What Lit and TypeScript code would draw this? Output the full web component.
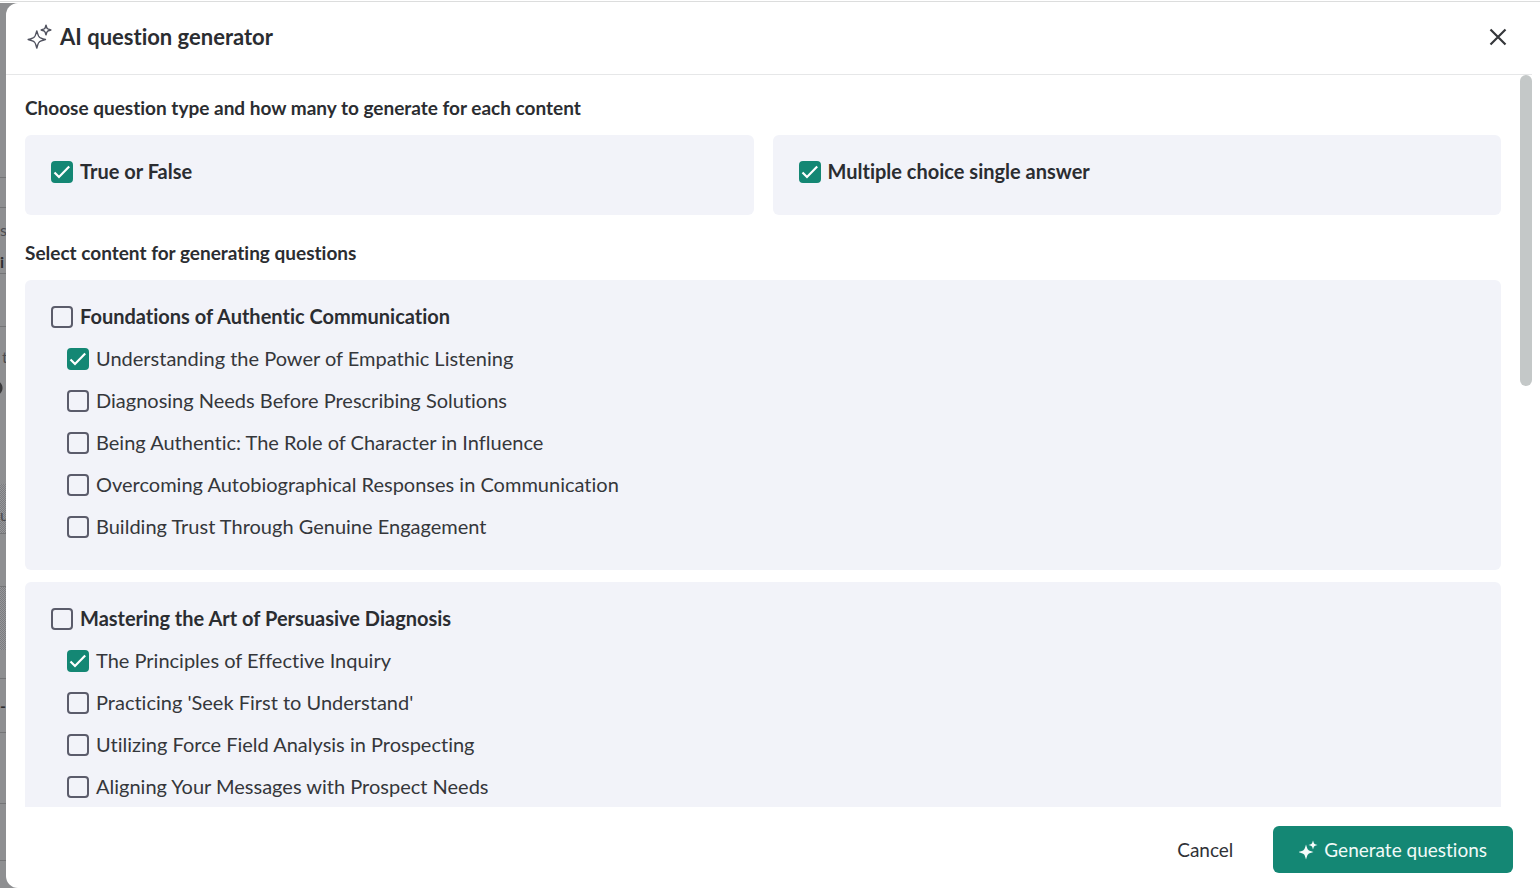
import { LitElement, html, css, svg } from "lit";
import { customElement, property, state } from "lit/decorators.js";

interface Lesson {
  title: string;
  checked: boolean;
}

interface Chapter {
  title: string;
  checked: boolean;
  lessons: Lesson[];
}

const QUESTION_TYPES: Lesson[] = [
  { title: "True or False", checked: true },
  { title: "Multiple choice single answer", checked: true },
];

const CHAPTERS: Chapter[] = [
  {
    title: "Foundations of Authentic Communication",
    checked: false,
    lessons: [
      { title: "Understanding the Power of Empathic Listening", checked: true },
      { title: "Diagnosing Needs Before Prescribing Solutions", checked: false },
      { title: "Being Authentic: The Role of Character in Influence", checked: false },
      { title: "Overcoming Autobiographical Responses in Communication", checked: false },
      { title: "Building Trust Through Genuine Engagement", checked: false },
    ],
  },
  {
    title: "Mastering the Art of Persuasive Diagnosis",
    checked: false,
    lessons: [
      { title: "The Principles of Effective Inquiry", checked: true },
      { title: "Practicing 'Seek First to Understand'", checked: false },
      { title: "Utilizing Force Field Analysis in Prospecting", checked: false },
      { title: "Aligning Your Messages with Prospect Needs", checked: false },
    ],
  },
];

/* Rows of the page that shows beside the dialog. */
const PAGE_ROWS = [
  { height: 175, text: "", kind: "" },
  { height: 30, text: "", kind: "" },
  { height: 43, text: "s", kind: "open" },
  { height: 23, text: "i", kind: "strong" },
  { height: 53, text: "", kind: "" },
  { height: 50, text: "t", kind: "open end" },
  { height: 107, text: "", kind: "open dot" },
  { height: 50, text: "u", kind: "shade low" },
  { height: 53, text: "", kind: "" },
  { height: 63, text: "", kind: "shade open" },
  { height: 29, text: "", kind: "" },
  { height: 54, text: "-", kind: "strong" },
  { height: 71, text: "", kind: "" },
  { height: 57, text: "", kind: "" },
];

/* Four-pointed star centred on cx, cy with rounded inner corners. */
const sparkle = (cx: number, cy: number, r: number) => {
  const k = r * 0.3;
  const n = r * 0.2;
  return svg`<path d="M${cx} ${cy - r}Q${cx + n} ${cy - k} ${cx + k} ${cy - k}
    Q${cx + k} ${cy - n} ${cx + r} ${cy}Q${cx + k} ${cy + n} ${cx + k} ${cy + k}
    Q${cx + n} ${cy + k} ${cx} ${cy + r}Q${cx - n} ${cy + k} ${cx - k} ${cy + k}
    Q${cx - k} ${cy + n} ${cx - r} ${cy}Q${cx - k} ${cy - n} ${cx - k} ${cy - k}
    Q${cx - n} ${cy - k} ${cx} ${cy - r}Z"/>`;
};

@customElement("check-option")
class CheckOption extends LitElement {
  @property() label = "";
  @property({ type: Boolean }) checked = false;
  @property({ type: Boolean }) strong = false;

  static styles = css`
    :host {
      display: block;
    }
    .option {
      display: flex;
      width: fit-content;
      align-items: center;
      gap: 7px;
      font-size: 20px;
      line-height: 22px;
      color: #35373b;
      cursor: pointer;
    }
    .text {
      padding-bottom: 2px;
    }
    .strong {
      font-weight: 700;
      color: #2b2d31;
    }
    .box {
      appearance: none;
      box-sizing: border-box;
      flex: none;
      width: 22px;
      height: 22px;
      margin: 0;
      border: 2px solid #5b5c6b;
      border-radius: 4px;
      cursor: pointer;
    }
    .box:checked {
      border-color: #148774;
      background: #148774
        url("data:image/svg+xml,%3Csvg xmlns='http://www.w3.org/2000/svg' viewBox='0 0 18 18'%3E%3Cpath d='M1.5 9.5l4.5 4.5L16.2 3.6' fill='none' stroke='white' stroke-width='2.2'/%3E%3C/svg%3E")
        center / 18px 18px no-repeat;
    }
  `;

  render() {
    return html`<label class="option ${this.strong ? "strong" : ""}">
      <input class="box" type="checkbox" .checked=${this.checked} />
      <span class="text">${this.label}</span>
    </label>`;
  }
}

@customElement("app-root")
class AppRoot extends LitElement {
  @state() private chapters = CHAPTERS;

  static styles = css`
    :host {
      display: flex;
      flex-direction: column;
      height: 100vh;
      position: relative;
      overflow: hidden;
      font-family: Lato, "Open Sans", sans-serif;
      font-variant-ligatures: none;
      color: #2b2d31;
      background: #ffffff;
    }
    * {
      box-sizing: border-box;
    }
    .topline {
      flex: none;
      height: 2px;
      border-bottom: 1px solid #dcdddd;
      margin-bottom: 1px;
    }
    .page {
      flex: 1;
      min-height: 0;
      width: 40px;
      background: #8e8f91;
    }
    .row {
      display: flex;
      align-items: center;
      border-bottom: 1px solid #747577;
      font-size: 16px;
      line-height: 20px;
      color: #4b4c50;
      white-space: nowrap;
    }
    .open {
      border-bottom: 0;
    }
    .end {
      padding: 10px 0 0 2px;
    }
    .low {
      padding-top: 12px;
    }
    .strong {
      font-weight: 700;
      color: #2d2e30;
    }
    .shade {
      background: repeating-conic-gradient(#7c7d80 0 25%, #96979a 0 50%) 0 0 / 2px 2px;
    }
    .dot {
      background: radial-gradient(circle at -5px 11px, #3a3a3c 7px, transparent 8px);
    }
    .dialog {
      position: absolute;
      inset: 3px 0 0 6px;
      display: flex;
      flex-direction: column;
      background: #ffffff;
      border-radius: 12px 0 0 12px;
    }
    .head {
      flex: none;
      display: flex;
      align-items: center;
      gap: 7px;
      height: 72px;
      margin-right: 8px;
      padding: 0 20px 3px 21px;
      border-bottom: 1px solid #e6e7e8;
    }
    .title {
      flex: 1;
      margin: 0;
      font-size: 22px;
      line-height: 28px;
      font-weight: 700;
    }
    .stars {
      fill: none;
      stroke: #50525f;
      stroke-width: 1.5;
      stroke-linejoin: round;
    }
    .close {
      display: grid;
      padding: 4px;
      border: 0;
      background: none;
      cursor: pointer;
    }
    .middle {
      flex: 1;
      min-height: 0;
      display: flex;
      padding-right: 8px;
    }
    .scroll {
      flex: 1;
      overflow-y: auto;
      scrollbar-width: none;
      padding: 21px 19px 0;
    }
    .thumb {
      width: 12px;
      height: 42.5%;
      border-radius: 6px;
      background: #c4c8c8;
    }
    .heading {
      margin: 0 0 15px;
      font-size: 19px;
      line-height: 24px;
      font-weight: 700;
    }
    .types {
      display: grid;
      grid-template-columns: 1fr 1fr;
      gap: 19px;
      margin-bottom: 26px;
    }
    .card {
      border-radius: 6px;
      background: #f2f3f9;
      padding: 25px 26px 31px;
    }
    .card + .chapter {
      margin-top: 12px;
    }
    .lessons {
      display: grid;
      gap: 18px;
      margin: 18px 0 0;
      padding: 0 0 0 16px;
      list-style: none;
    }
    .foot {
      flex: none;
      display: flex;
      align-items: center;
      justify-content: flex-end;
      gap: 14px;
      height: 81px;
      padding: 4px 27px 0 0;
    }
    .button {
      display: flex;
      align-items: center;
      gap: 5px;
      height: 47px;
      padding: 0 26px;
      border: 0;
      border-radius: 6px;
      background: none;
      font-family: inherit;
      font-variant-ligatures: none;
      font-size: 19px;
      line-height: 24px;
      color: #2f3136;
      cursor: pointer;
    }
    .primary {
      background: #148774;
      color: #f1faf8;
    }
    .primary svg {
      fill: #f6fcfb;
    }
  `;

  render() {
    return html`
      <div class="topline"></div>
      <div class="page" aria-hidden="true">
        ${PAGE_ROWS.map(
          (r) => html`<div class="row ${r.kind}" style="height:${r.height}px">${r.text}</div>`
        )}
      </div>
      <section class="dialog" role="dialog" aria-labelledby="title">
        <header class="head">
          <svg class="stars" width="26" height="26" viewBox="0 0 26 26" aria-hidden="true">
            ${sparkle(9.8, 15.5, 8.6)} ${sparkle(19, 6, 4.8)}
          </svg>
          <h1 class="title" id="title">AI question generator</h1>
          <button class="close" type="button" aria-label="Close">
            <svg width="20" height="20" viewBox="0 0 20 20" fill="none" stroke="#35373b" stroke-width="2.2">
              <path d="M2.5 2.5l15 15M17.5 2.5l-15 15" />
            </svg>
          </button>
        </header>
        <div class="middle">
          <div class="scroll">
            <h2 class="heading">Choose question type and how many to generate for each content</h2>
            <div class="types">
              ${QUESTION_TYPES.map(
                (t) => html`<div class="card">
                  <check-option strong .label=${t.title} .checked=${t.checked}></check-option>
                </div>`
              )}
            </div>
            <h2 class="heading">Select content for generating questions</h2>
            ${this.chapters.map(
              (c) => html`<div class="card chapter">
                <check-option strong .label=${c.title} .checked=${c.checked}></check-option>
                <ul class="lessons">
                  ${c.lessons.map(
                    (l) => html`<li>
                      <check-option .label=${l.title} .checked=${l.checked}></check-option>
                    </li>`
                  )}
                </ul>
              </div>`
            )}
          </div>
          <div class="thumb"></div>
        </div>
        <footer class="foot">
          <button class="button" type="button">Cancel</button>
          <button class="button primary" type="button">
            <svg width="20" height="20" viewBox="0 0 20 20" aria-hidden="true">
              ${sparkle(7, 12, 7.5)} ${sparkle(14, 5, 4.5)}
            </svg>
            Generate questions
          </button>
        </footer>
      </section>
    `;
  }
}
